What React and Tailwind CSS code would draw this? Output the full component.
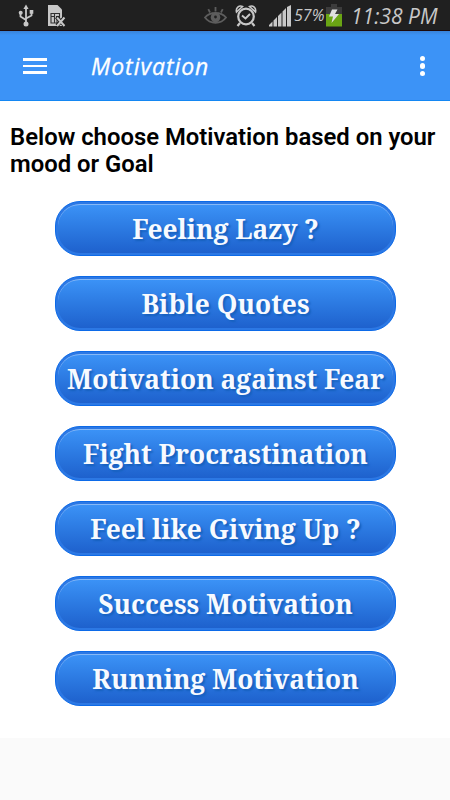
import React from "react";

const moods = [
  { label: "Feeling Lazy ?" },
  { label: "Bible Quotes" },
  { label: "Motivation against Fear" },
  { label: "Fight Procrastination" },
  { label: "Feel like Giving Up ?" },
  { label: "Success Motivation" },
  { label: "Running Motivation" },
];

function StatusBar() {
  return (
    <div className="h-[31px] bg-[#202020] border-b border-[#1c0a0c] flex items-center text-[#c8c8c8]">
      <svg className="ml-[18px] mt-[2px] shrink-0" width="16" height="24" viewBox="0 0 16 24" fill="none" stroke="currentColor" strokeWidth="1.8">
        <path d="M8 4v15M2.5 9v3.5L8 16M13.5 8.5v3L8 14.5" />
        <path d="M8 .5l2.6 4.5H5.4z" fill="currentColor" stroke="none" />
        <circle cx="2.7" cy="8.8" r="2" fill="currentColor" stroke="none" />
        <path d="M11.7 6h3.6v3.8h-3.6z" fill="currentColor" stroke="none" />
        <circle cx="8" cy="20" r="2.5" fill="currentColor" stroke="none" />
      </svg>
      <svg className="ml-[14px] mt-[2px] shrink-0" width="18" height="24" viewBox="0 0 18 24" fill="none">
        <path d="M0 1h9.5l4.5 4.5V22H0z" fill="#c8c8c8" />
        <path d="M3 9.5h8.5V19H3zM3 12.5h3.5M8 12.5h3.5M6.5 10v9M9 12.5V19" stroke="#303030" strokeWidth="1.1" />
        <path d="M8.5 13l8 8.5M17 13l-8 8.5" stroke="#202020" strokeWidth="4" />
        <path d="M9 13.5l7.5 8.5M16.5 13.5l-7.5 8.5" stroke="#c8c8c8" strokeWidth="2" />
      </svg>
      <svg className="ml-[138px] mt-[2px] shrink-0 text-[#5d5d5d]" width="23" height="20" viewBox="0 0 23 20" fill="none" stroke="currentColor" strokeWidth="1.8">
        <path d="M1 11.5C6 5.5 17 5.5 22 11.5 17 18.5 6 18.5 1 11.5z" />
        <path d="M11.5 5.5V1M6 6.5L4.3 3.2M17 6.5l1.7-3.3" />
        <circle cx="11.5" cy="11.5" r="4.8" fill="currentColor" stroke="none" />
        <circle cx="11.5" cy="11" r="1.4" fill="#202020" stroke="none" />
      </svg>
      <svg className="ml-[8px] mt-[2px] shrink-0" width="22" height="24" viewBox="0 0 22 24" fill="none" stroke="currentColor">
        <circle cx="11" cy="12.5" r="7.8" strokeWidth="2.2" />
        <path d="M7 11.5l3.5 3 4.5-4.5" strokeWidth="1.9" />
        <path d="M1.5 8C.5 4 4 1 7.5 2.5zM20.5 8c1-4-2.5-7-6-5.5z" strokeWidth="1.6" />
        <path d="M5 19l-2.5 3M17 19l2.5 3" strokeWidth="2.2" />
      </svg>
      <svg className="ml-[12px] mt-[2px] shrink-0" width="22" height="22" viewBox="0 0 22 22" fill="currentColor">
        <path d="M0 21.5V20l3.5-3.5v5zM4.5 21.5v-6L8 12v9.5zM9 21.5V11l3.5-3.5v14zM13.5 21.5v-15L17 3v18.5zM18 21.5V2l4-2v21.500z" />
      </svg>
      <span className="ml-[3px] w-[30px] shrink-0 whitespace-nowrap font-['Open_Sans',sans-serif] italic text-[16px] leading-none">57%</span>
      <svg className="ml-[2px] mt-[2px] shrink-0" width="16" height="24" viewBox="0 0 16 24">
        <path d="M5 0h6v3h5v7H0V3h5z" fill="#3c3c3c" />
        <path d="M0 10h16v12.5H0z" fill="#6aa514" />
        <path d="M6 5.5h5.5L9 10h4l-7.5 9L7 12.500H3z" fill="#e0e0e0" />
      </svg>
      <span className="ml-[9px] mt-[2px] w-[90px] shrink-0 whitespace-nowrap font-['Open_Sans',sans-serif] italic text-[21px] leading-none">11:38 PM</span>
    </div>
  );
}

function Header() {
  return (
    <header className="h-[70px] bg-[#3c93f7] bg-linear-to-b from-[#3983da] from-0% to-[#3c93f7] to-[6%] border-b border-[#1487f3] flex items-center text-white">
      <button className="ml-[23px] mt-[1px] w-6 flex flex-col gap-[4px]">
        <span className="h-[2.5px] bg-white" />
        <span className="h-[2.5px] bg-white" />
        <span className="h-[2.5px] bg-white" />
      </button>
      <h1 className="ml-[44px] mt-[2px] whitespace-nowrap font-['Open_Sans',sans-serif] italic text-[23px] leading-none tracking-[0.95px] [-webkit-text-stroke:0.3px_white]">Motivation</h1>
      <button className="ml-auto mr-[25px] mt-[1px] flex flex-col gap-[2px]">
        <span className="size-[5.5px] rounded-full bg-white" />
        <span className="size-[5.5px] rounded-full bg-white" />
        <span className="size-[5.5px] rounded-full bg-white" />
      </button>
    </header>
  );
}

function MoodButton({ label }) {
  return (
    <button className="w-[341px] h-[55px] rounded-[25px] border border-[#0c6ae8] bg-[#2c78e4] p-[2px] flex">
      <span className="flex-1 h-full rounded-[22px] border-t border-[#86b9f7] bg-linear-to-b from-[#3b92f6] to-[#1e61cd] flex items-center justify-center whitespace-nowrap text-[#f7faff] font-bold font-['Noto_Serif',serif] text-[26.35px] leading-none [text-shadow:2px_2px_2px_#1660bd]">
        <span>{label}</span>
      </span>
    </button>
  );
}

function App() {
  return (
    <div className="w-[450px] h-[800px] overflow-hidden bg-[#fafafa]">
      <StatusBar />
      <Header />
      <main className="h-[637px] bg-white pt-[23px]">
        <h2 className="ml-[10px] w-[436px] font-[Roboto,sans-serif] font-semibold text-[23.85px] leading-[27px] text-black">
          Below choose Motivation based on your mood or Goal
        </h2>
        <div className="mt-[23px] ml-[55px] flex flex-col gap-5">
          {moods.map((mood) => (
            <MoodButton key={mood.label} label={mood.label} />
          ))}
        </div>
      </main>
    </div>
  );
}

export default App;
